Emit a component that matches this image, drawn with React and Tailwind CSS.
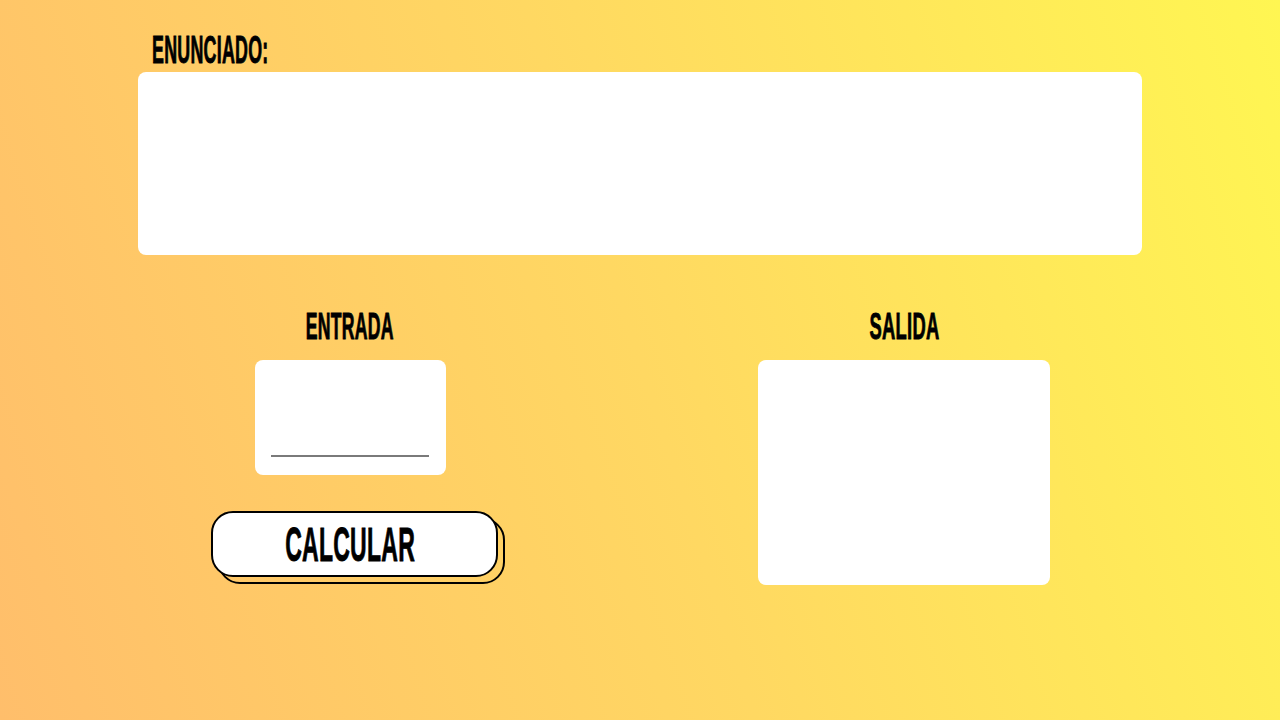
import React from "react";

const font = { fontFamily: '"Liberation Sans", Arial, sans-serif' };

function Label({ children, className = "", origin = "origin-center" }) {
  return (
    <span
      style={font}
      className={`inline-block font-bold text-black uppercase tracking-[0.5px] [-webkit-text-stroke:0.9px_black] ${origin} ${className}`}
    >
      {children}
    </span>
  );
}

export default function App() {
  return (
    <div className="w-full h-[720px] overflow-hidden bg-[linear-gradient(72deg,#ffbe6b_0%,#ffd862_50%,#fff652_100%)]">
      <div className="mx-auto w-[1004px] pt-[31px]">
        <div className="h-[38px] pl-[14px] leading-[38px] mb-[3px]">
          <Label className="text-[38px] leading-[38px] scale-x-[0.47]" origin="origin-left">
            ENUNCIADO:
          </Label>
        </div>
        <div className="h-[183px] w-full rounded-lg bg-white" />

        <div className="mt-[54px] flex pl-[72px] gap-[268px]">
          <div className="flex w-[280px] flex-col items-center">
            <div className="h-[36px] leading-[36px] mb-[15px] flex justify-center w-full">
              <Label className="text-[36px] leading-[36px] scale-x-[0.49]">ENTRADA</Label>
            </div>
            <div className="flex h-[115px] w-[191px] flex-col justify-end rounded-lg bg-white pl-4 pr-[17px] pb-[18px]">
              <div className="h-[2px] w-full bg-[#7a7a7a]" />
            </div>
            <div className="relative mt-[36px] self-start ml-[1px] h-[66px] w-[287px]">
              <div className="absolute left-[7px] top-[7px] h-[66px] w-[287px] rounded-[22px] border-2 border-black" />
              <button className="relative flex h-[66px] w-[287px] items-center justify-center rounded-[22px] border-2 border-black bg-white">
                <Label className="text-[49px] leading-[49px] scale-x-[0.47] -translate-x-[4px]">CALCULAR</Label>
              </button>
            </div>
          </div>

          <div className="flex w-[292px] flex-col items-center">
            <div className="h-[36px] leading-[36px] mb-[15px] flex justify-center w-full">
              <Label className="text-[36px] leading-[36px] scale-x-[0.51]">SALIDA</Label>
            </div>
            <div className="h-[225px] w-[292px] rounded-lg bg-white" />
          </div>
        </div>
      </div>
    </div>
  );
}
